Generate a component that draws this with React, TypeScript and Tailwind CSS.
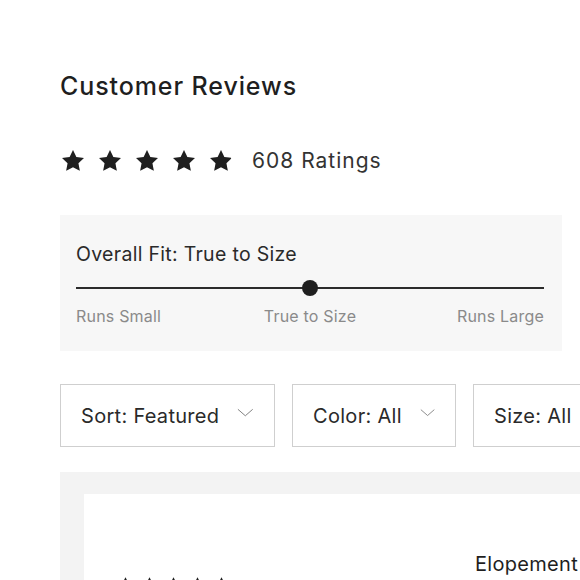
const STAR = 'M12 1.8l3.1 6.5 7 .9-5.1 4.9 1.3 7L12 17.7l-6.3 3.4 1.3-7L1.9 9.2l7-.9L12 1.8z'

function Star({ size = 22, fill = 1, id }: { size?: number; fill?: number; id: string }) {
  return (
    <svg width={size} height={size} viewBox="0 0 24 24">
      <defs>
        <clipPath id={id}>
          <rect x="0" y="0" width={24 * fill} height="24" />
        </clipPath>
      </defs>
      <path d={STAR} fill="#e3e3e3" />
      <path d={STAR} fill="#1f1f1f" clipPath={`url(#${id})`} />
    </svg>
  )
}

function Chevron() {
  return (
    <svg width="18" height="10" viewBox="0 0 18 10" fill="none" className="-mt-[6px]">
      <path d="M1 1l8 7L17 1" stroke="#777" strokeWidth="1" />
    </svg>
  )
}

function Dropdown({ label, width, chevron = true }: { label: string; width: string; chevron?: boolean }) {
  return (
    <div className={`${width} h-[63px] shrink-0 border border-[#cfcfcf] bg-white flex items-center pl-5 pr-5 gap-[18px]`}>
      <span className="text-[20px] tracking-[0.3px] text-[#2a2a2a] whitespace-nowrap">{label}</span>
      {chevron && <Chevron />}
    </div>
  )
}

export default function App() {
  return (
    <div className="w-[580px] h-[580px] overflow-hidden bg-white font-['Inter',sans-serif]">
      <div className="pl-[60px] pt-[71px]">
        <h2 className="text-[25px] leading-[30px] font-medium text-[#1f1f1f] tracking-[0.9px]">Customer Reviews</h2>

        <div className="mt-[47px] flex items-center h-[26px]">
          <div className="flex items-center gap-[11px]">
            {[1, 1, 1, 1, 0.88].map((f, i) => (
              <Star key={i} id={`top-star-${i}`} size={26} fill={f} />
            ))}
          </div>
          <span className="ml-[18px] text-[21px] text-[#333] tracking-[1px]">608 Ratings</span>
        </div>

        <div className="mt-[41px] w-[502px] bg-[#f7f7f7] pl-4 pr-[18px] pt-[27px] pb-[25px]">
          <p className="text-[19.5px] leading-[24px] text-[#2a2a2a] tracking-[0.3px]">Overall Fit: True to Size</p>
          <div className="relative mt-[14px] h-[16px]">
            <div className="absolute left-0 right-0 top-[7px] h-[2px] bg-[#2b2b2b]" />
            <div className="absolute left-1/2 top-0 -ml-[8px] w-[16px] h-[16px] rounded-full bg-[#1f1f1f]" />
          </div>
          <div className="mt-[10px] grid grid-cols-3 text-[16px] leading-[20px] text-[#8a8a8a] tracking-[0.2px]">
            <span>Runs Small</span>
            <span className="text-center">True to Size</span>
            <span className="text-right">Runs Large</span>
          </div>
        </div>

        <div className="mt-[33px] flex gap-[17px]">
          <Dropdown label="Sort: Featured" width="w-[215px]" />
          <Dropdown label="Color: All" width="w-[164px]" />
          <Dropdown label="Size: All" width="w-[160px]" />
        </div>

        <div className="mt-[25px] w-[560px] bg-[#f3f3f3] pl-6 pt-[22px]">
          <div className="bg-white h-[120px] flex pl-[34px] pt-[58px]">
            <div className="w-[357px] shrink-0 pt-[24px] flex gap-[9px]">
              {[0, 1, 2, 3, 4].map((i) => (
                <Star key={i} id={`small-star-${i}`} size={15} />
              ))}
            </div>
            <span className="text-[20px] leading-[24px] text-[#1f1f1f] whitespace-nowrap tracking-[0.3px]">Elopement</span>
          </div>
        </div>
      </div>
    </div>
  )
}
